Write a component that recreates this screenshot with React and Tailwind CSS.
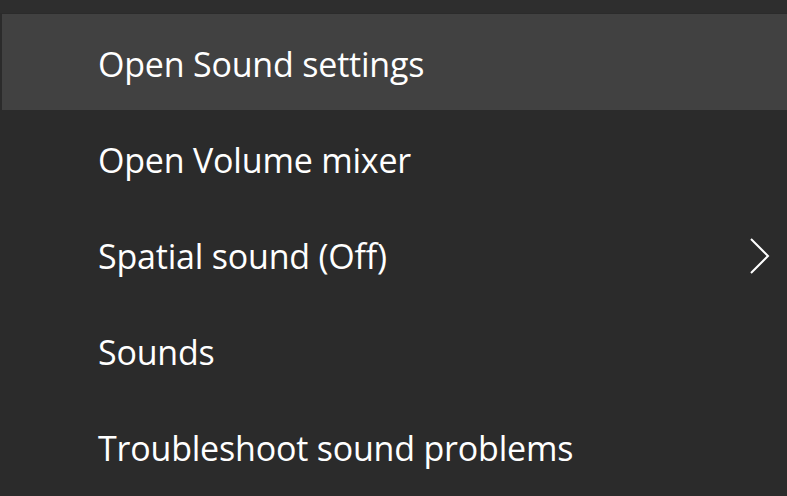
export default function App() {
  const items = [
    { label: "Open Sound settings", active: true },
    { label: "Open Volume mixer" },
    { label: "Spatial sound (Off)", sub: true },
    { label: "Sounds" },
    { label: "Troubleshoot sound problems" },
  ];
  return (
    <div className="w-[787px] h-[496px] bg-[#2b2b2b] overflow-hidden" style={{ fontFamily: '"Open Sans", "Noto Sans", sans-serif' }}>
      <div className="h-[13px] bg-[#2e2e2e]" />
      <div className="h-[1px]" />
      {items.map((it) => (
        <div
          key={it.label}
          className={
            it.active
              ? "h-[96px] flex items-center justify-between bg-[#414141] ml-[2px] pl-[96px] pr-[16px] pt-[3px]"
              : "h-[96px] flex items-center justify-between pl-[98px] pr-[16px] pt-[3px]"
          }
        >
          <span className="text-white text-[34px] font-normal leading-none tracking-[-0.2px]">{it.label}</span>
          {it.sub && (
            <svg width="22" height="38" viewBox="0 0 22 38">
              <path d="M2 2 L19 19 L2 36" fill="none" stroke="#ffffff" strokeWidth="2" />
            </svg>
          )}
        </div>
      ))}
    </div>
  );
}
